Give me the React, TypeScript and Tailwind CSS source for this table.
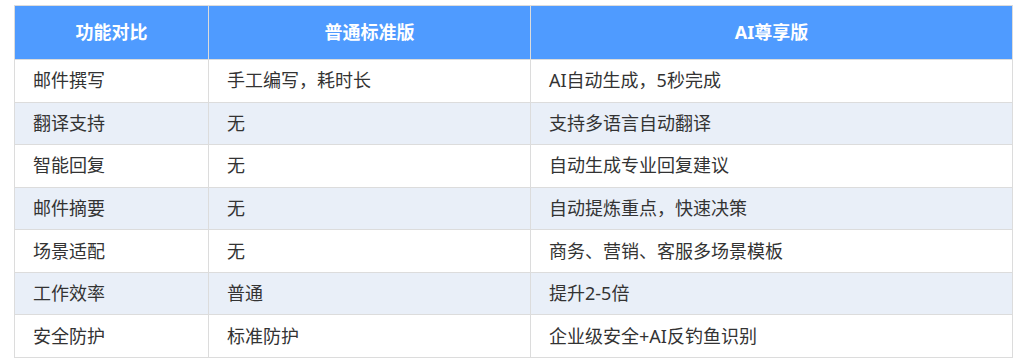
import React from "react";

const rows: [string, string, string][] = [
  ["邮件撰写", "手工编写，耗时长", "AI自动生成，5秒完成"],
  ["翻译支持", "无", "支持多语言自动翻译"],
  ["智能回复", "无", "自动生成专业回复建议"],
  ["邮件摘要", "无", "自动提炼重点，快速决策"],
  ["场景适配", "无", "商务、营销、客服多场景模板"],
  ["工作效率", "普通", "提升2-5倍"],
  ["安全防护", "标准防护", "企业级安全+AI反钓鱼识别"],
];

const font = {
  fontFamily: '"Noto Sans", "Noto Sans CJK SC", sans-serif',
};

export default function App() {
  return (
    <div className="w-[1030px] h-[361px] bg-white pt-[5px] pl-[14px]" style={font}>
      <div className="w-[999px] border-r border-b border-[#dcdcdc]">
        <div className="grid grid-cols-[194px_322px_482px] h-[54px] bg-[#4f9bff] text-white font-bold text-[18px]">
          {["功能对比", "普通标准版", "AI尊享版"].map((h) => (
            <div
              key={h}
              className="flex items-center justify-center border-l border-t border-[#dcdcdc]"
            >
              {h}
            </div>
          ))}
        </div>
        {rows.map((r, i) => (
          <div
            key={r[0]}
            className={`grid grid-cols-[194px_322px_482px] h-[42.57px] text-[18px] text-[#333333] ${
              i % 2 === 1 ? "bg-[#e9eff8]" : "bg-white"
            }`}
          >
            {r.map((c, j) => (
              <div
                key={j}
                className="flex items-center pl-[18px] border-l border-t border-[#dcdcdc] whitespace-nowrap"
              >
                {c}
              </div>
            ))}
          </div>
        ))}
      </div>
    </div>
  );
}
